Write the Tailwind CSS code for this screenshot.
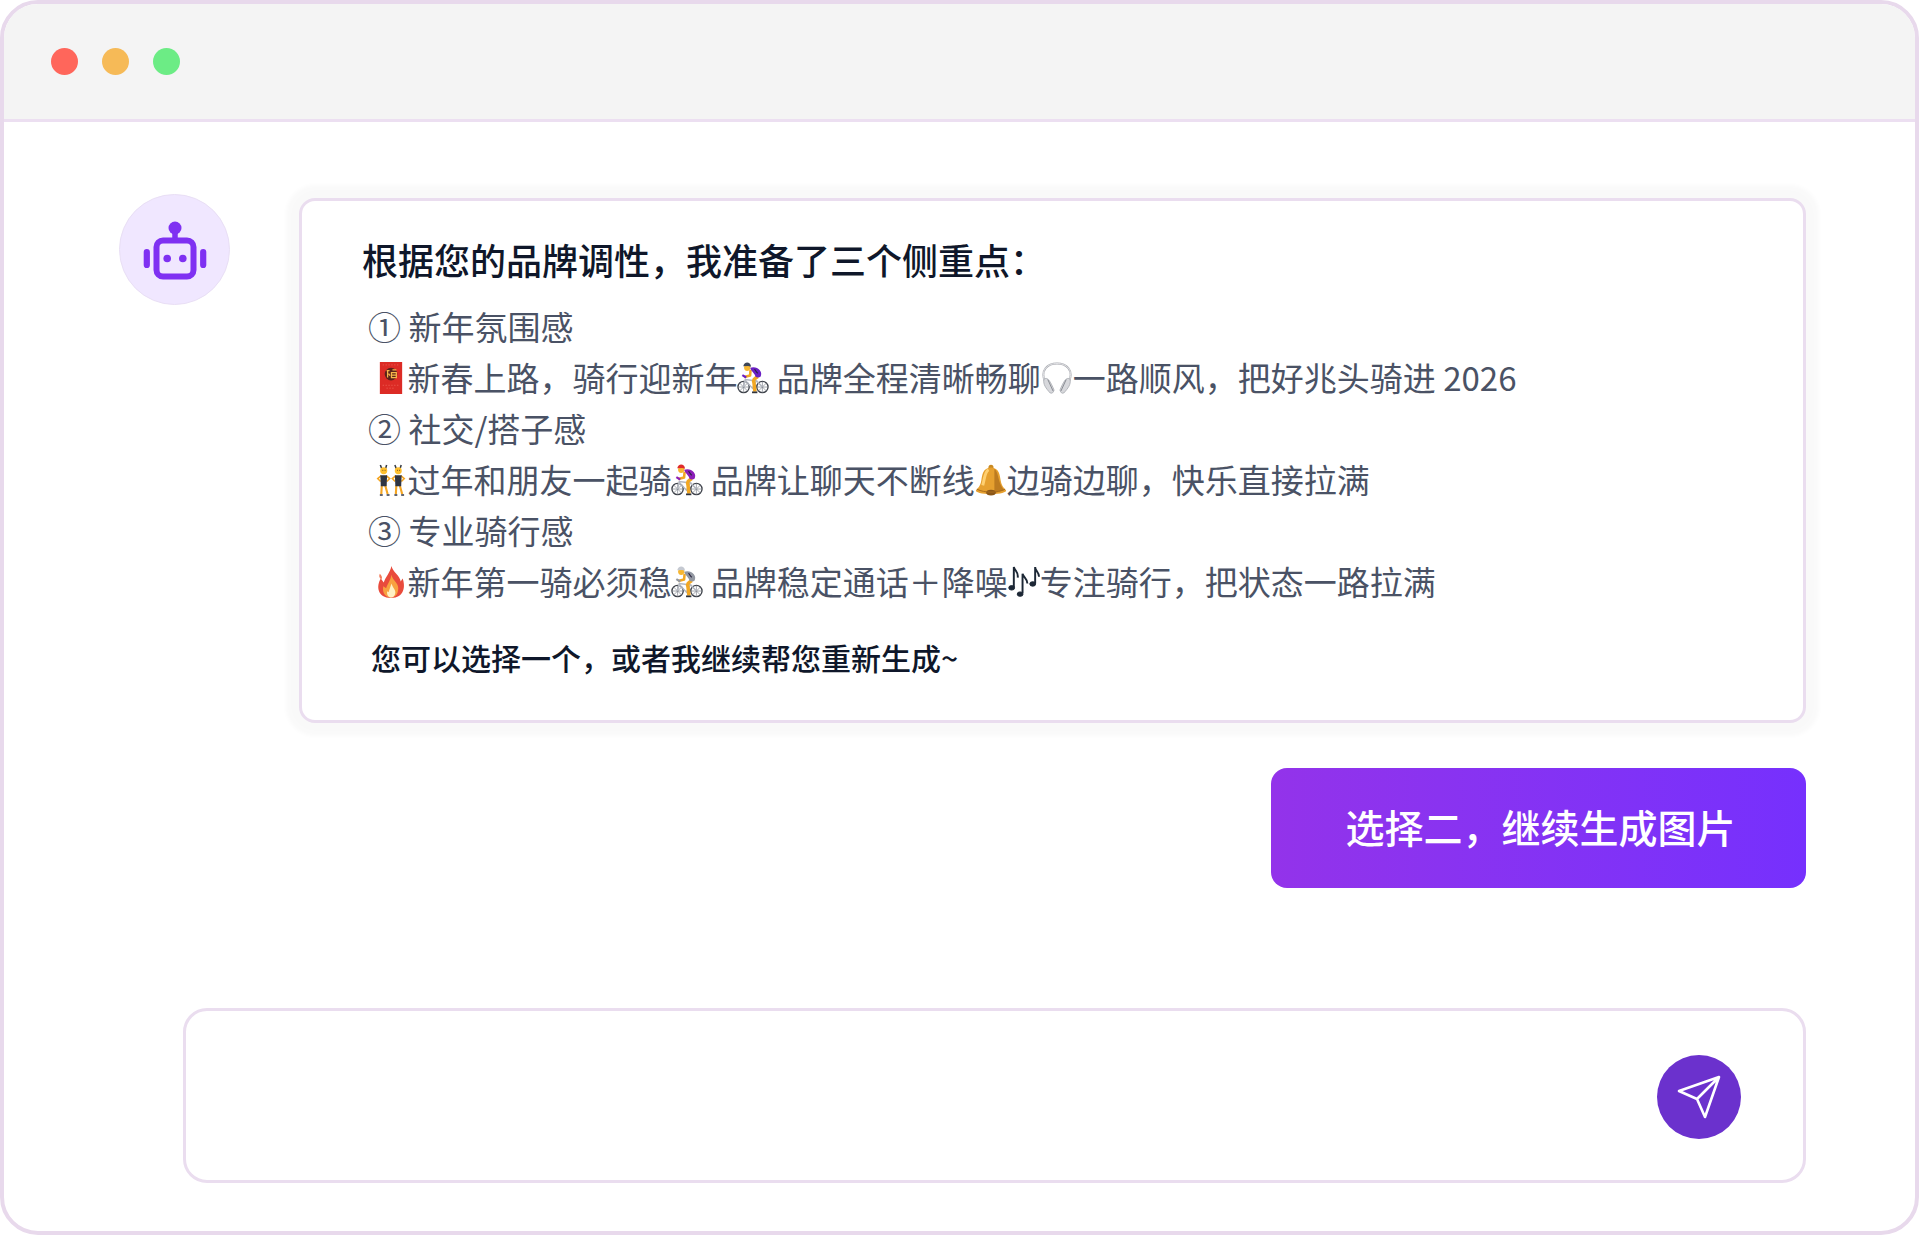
<!DOCTYPE html>
<html lang="zh-CN">
<head>
<meta charset="utf-8">
<meta name="viewport" content="width=device-width, initial-scale=1">
<title>AI 助手</title>
<script src="https://cdn.jsdelivr.net/npm/@tailwindcss/browser@4"></script>
</head>
<body class="flex min-h-screen flex-col bg-white pr-px pb-px font-['Noto_Sans_CJK_SC',sans-serif]">
<svg class="hidden" aria-hidden="true">
  <defs>
    <symbol id="cyclist" viewBox="0 0 33 33">
      <g fill="none" stroke="#3f434b" stroke-width="1.4">
        <circle cx="6.8" cy="25.8" r="5.800"/><circle cx="26.200" cy="25.800" r="5.800"/>
      </g>
      <g fill="none" stroke="#7d828c" stroke-width=".7">
        <path d="M6.800 20v11.600M1 25.800h11.600M2.700 21.700l8.200 8.200M10.900 21.700l-8.200 8.200M26.200 20v11.600M20.400 25.800H32M22.100 21.700l8.200 8.200M30.300 21.700l-8.200 8.200"/>
      </g>
      <path d="M6.800 25.800 8.500 18l11.500 1.500L16 27 8.500 19M20 19l6.200 6.800" fill="none" stroke="#b4b8c0" stroke-width="1.500"/>
      <path d="M21.500 15c-4 2.500-5 3.500-4 6.500l1 9" fill="none" stroke="#f2a722" stroke-width="3.600" stroke-linejoin="round"/>
      <path d="M15.500 31.300h5.500" stroke="#30343c" stroke-width="1.800"/>
      <path d="m14 8-.5 6L7.500 15.500" fill="none" stroke="#f2a722" stroke-width="2.600" stroke-linejoin="round"/>
      <path d="M13.500 6c4-1.500 8 0 10 2.500 2 2.500 1.800 5 .5 7-2 .8-4 .5-5-.5-.5-3-3.500-4-5.500-9Z" fill="currentColor"/>
      <path d="M18 7.500c1.500 1 1.500 3 3.500 4" fill="none" stroke="#2b2540" stroke-width="1.200"/>
      <circle cx="10.500" cy="6" r="3.200" fill="#f7b733"/>
      <path d="M6.500 4.500C7-.5 14-1 14.500 5l-3-1Z" fill="var(--helmet)"/>
      <path d="m5.500 13.500 4 2.500" stroke="currentColor" stroke-width="2.200"/>
    </symbol>
    <symbol id="dancer" viewBox="0 0 16 33">
      <path d="m4.500 1 1.500 4M11 1 9.800 5" stroke="#363b45" stroke-width="1.600"/>
      <path d="M5.500 12 1.800 15l3 3M10.500 12l3.700 3-3 3" fill="none" stroke="#f5a623" stroke-width="1.600"/>
      <path d="M6 22 5.500 31M9.500 22l2.500 9" stroke="#f5a623" stroke-width="2.200"/>
      <circle cx="8" cy="7" r="3.600" fill="#ffc02e"/>
      <path d="M6.700 6.500h.8M9 6.500h.8" stroke="#5b3b16"/>
      <path d="M4.500 11.500h7L11 23H5Z" fill="#303541"/>
      <path d="M4 32h3M11 32h3" stroke="#303541" stroke-width="1.600"/>
    </symbol>
  </defs>
</svg>

<div class="flex flex-1 flex-col rounded-[38px] border-4 border-[#e8d9ec] bg-white">
  <header class="flex h-[118px] items-center gap-6 rounded-t-[34px] border-b-[3px] border-[#ecdff1] bg-[#f4f4f4] px-[47px]">
    <span class="size-[27px] rounded-full bg-[#ff665b]"></span>
    <span class="size-[27px] rounded-full bg-[#f6ba57]"></span>
    <span class="size-[27px] rounded-full bg-[#6cec85]"></span>
  </header>

  <main class="flex flex-1 flex-col pt-[72px] pr-[109px] pb-12 pl-[115px]">
    <section class="flex items-start gap-[69px]">
      <div class="flex size-[111px] shrink-0 items-center justify-center rounded-full border border-[#e9dff5] bg-[#f0e7ff]">
        <svg class="size-[66px] text-[#7f31f2]" viewBox="0 0 66 66" role="img" aria-label="机器人">
          <circle cx="33" cy="11" r="6.500" fill="currentColor"/>
          <path d="M33 14v10" stroke="currentColor" stroke-width="5.500"/>
          <rect x="14.500" y="23.500" width="37" height="36" rx="6.500" fill="none" stroke="currentColor" stroke-width="6"/>
          <path d="M4.800 35v13M61.200 35v13" stroke="currentColor" stroke-width="6.200" stroke-linecap="round"/>
          <circle cx="25.200" cy="41.500" r="3.800" fill="currentColor"/>
          <circle cx="40.800" cy="41.500" r="3.800" fill="currentColor"/>
        </svg>
      </div>
      <article class="mt-1 flex-1 rounded-2xl border-[3px] border-[#eaddef] bg-white pt-[31px] pb-10 pl-[60px] shadow-[0_0_4px_13px_rgba(0,0,0,0.024)]">
        <h1 class="text-[36px] leading-[54px] font-medium text-[#0f172a]">根据您的品牌调性，我准备了三个侧重点：</h1>
        <div class="mt-[15px] ml-[6px] text-[33px] leading-[51px] text-[#4a5265]">
          <p>① 新年氛围感</p>
          <p>&nbsp;<svg class="inline-block size-8 -mt-2" viewBox="0 0 33 33" role="img" aria-label="红包"><path d="M5 0h23v33H5Z" fill="#dc2b25"/><path d="M8 3h17M8 24h17M12 27h9" stroke="#f0665a" stroke-dasharray="1 2"/><circle cx="16.500" cy="12.500" r="6.500" fill="#5b2219"/><path d="M12 9h3m-2 0v7m5-8h4m-5 3h5v5h-5Zm0 2.500h5M14 12l1.500 2" fill="none" stroke="#f6b64a" stroke-width="1.300"/></svg>新春上路，骑行迎新年<svg class="inline-block size-8 -mt-2 text-[#6a1fc4] [--helmet:#3d4657]" role="img" aria-label="骑行"><use href="#cyclist"/></svg> 品牌全程清晰畅聊<svg class="inline-block size-8 -mt-2" viewBox="0 0 33 33" role="img" aria-label="耳机"><path d="M4 20C-1 8 7 1.500 16.500 1.500S34 8 29 20" fill="none" stroke="#a9abb1" stroke-width="2"/><path d="M4 20C-1 8 7 1.500 16.500 1.500S34 8 29 20" fill="none" stroke="#f1f1f3" stroke-width=".8"/><path d="M3 18c3-3 6 0 10.500 11-1 3-2 3.500-4 3C5 27 2 23 3 18Z" fill="#d7d8dc" stroke="#a5a7ad" stroke-width=".8"/><path d="M30 18c-3-3-6 0-10.500 11 1 3 2 3.500 4 3C28 27 31 23 30 18Z" fill="#d7d8dc" stroke="#a5a7ad" stroke-width=".8"/><path d="m7 18 5.500 12M26 18l-5.500 12" stroke="#85888f"/></svg>一路顺风，把好兆头骑进 2026</p>
          <p>② 社交/搭子感</p>
          <p>&nbsp;<svg class="inline-block size-8 -mt-2" viewBox="0 0 33 33" role="img" aria-label="好友"><use href="#dancer" x="1" width="16" height="33"/><use href="#dancer" x="16" width="16" height="33"/></svg>过年和朋友一起骑<svg class="inline-block size-8 -mt-2 text-[#8c1fb8] [--helmet:#e02b2b]" role="img" aria-label="骑行"><use href="#cyclist"/></svg> 品牌让聊天不断线<svg class="inline-block size-8 -mt-2" viewBox="0 0 33 33" role="img" aria-label="铃铛"><circle cx="16.500" cy="3.500" r="2.600" fill="#c98a22"/><path d="M16.500 3.500C8 4 7.500 11 6.500 17S3.500 24 1 27c-1 2 6 4 15.500 4S33 29 32 27c-2.500-3-4.500-4-5.500-10S25 4 16.500 3.500Z" fill="#e6a02f"/><path d="M14 6c-4 2-4 9-6 16" fill="none" stroke="#ffd071" stroke-width="3"/><path d="M20 5c5 4 3 14 10 22l-10 3Z" fill="#bd7b20"/><ellipse cx="16.500" cy="29.500" rx="5" ry="3" fill="#8b5718"/><path d="M2 26c8 4 21 4 29 0" fill="none" stroke="#a76b1c"/></svg>边骑边聊，快乐直接拉满</p>
          <p>③ 专业骑行感</p>
          <p>&nbsp;<svg class="inline-block size-8 -mt-2" viewBox="0 0 33 33" role="img" aria-label="火"><path d="M17 0c1 6 9 10 9.500 16l2-3c3 8 2 20-12 20S1 21 6 13l3 4C11 11 15 8 17 0Z" fill="#e94b3c"/><path d="M5 8c2 2 3 4 1.500 6C4 12 4 10 5 8Z" fill="#f37a58"/><path d="M17 9c1 6 7 8 7 14 0 7-4 9.500-8 9.500S7 29 8.500 21l3 2C13 18 16 15 17 9Z" fill="#f8a13f"/><path d="M17 18c1 4 4 6 4 9s-2 5.500-4.500 5.500S12 30 12.500 26l1.500 1Z" fill="#fff1c4"/></svg>新年第一骑必须稳<svg class="inline-block size-8 -mt-2 text-[#9297a1] [--helmet:#c5c9d1]" role="img" aria-label="骑行"><use href="#cyclist"/></svg> 品牌稳定通话＋降噪<svg class="inline-block size-8 -mt-2" viewBox="0 0 33 33" role="img" aria-label="音符"><g fill="#1c2735" stroke="#1c2735"><path d="M6 22V1c1 4 5 5 4 11M15 28V8c1 4 5 5 5 10M28 18V1c0 4 4 5 4 10" fill="none" stroke-width="2"/><ellipse cx="3.800" cy="22.500" rx="3" ry="2.300"/><ellipse cx="12.500" cy="29" rx="3" ry="2.300"/><ellipse cx="25.500" cy="18.500" rx="3" ry="2.300"/></g></svg>专注骑行，把状态一路拉满</p>
        </div>
        <p class="mt-7 ml-[9px] text-[30px] leading-[45px] font-medium text-[#0f172a]">您可以选择一个，或者我继续帮您重新生成~</p>
      </article>
    </section>

    <button type="button" class="mt-[45px] h-[120px] w-[535px] self-end rounded-2xl bg-linear-to-r from-[#9333ea] to-[#7630fd] pb-1 pl-1 text-[39px] font-medium text-white">选择二，继续生成图片</button>

    <form class="mt-[120px] ml-16 flex h-[175px] items-center rounded-3xl border-[3px] border-[#eaddef] pt-0.5 pr-[62px] pl-12">
      <input type="text" aria-label="输入消息" class="h-full min-w-0 flex-1 text-[33px] text-[#4a5265] outline-none">
      <button type="submit" aria-label="发送" class="flex size-[84px] shrink-0 items-center justify-center rounded-full bg-[#6b31cd] text-white">
        <svg class="size-11" viewBox="0 0 44 44" fill="none" stroke="currentColor" stroke-width="2.600" stroke-linejoin="round"><path d="M42 2 2 16l18 8 8 18ZM42 2 20 24"/></svg>
      </button>
    </form>
  </main>
</div>
</body>
</html>
